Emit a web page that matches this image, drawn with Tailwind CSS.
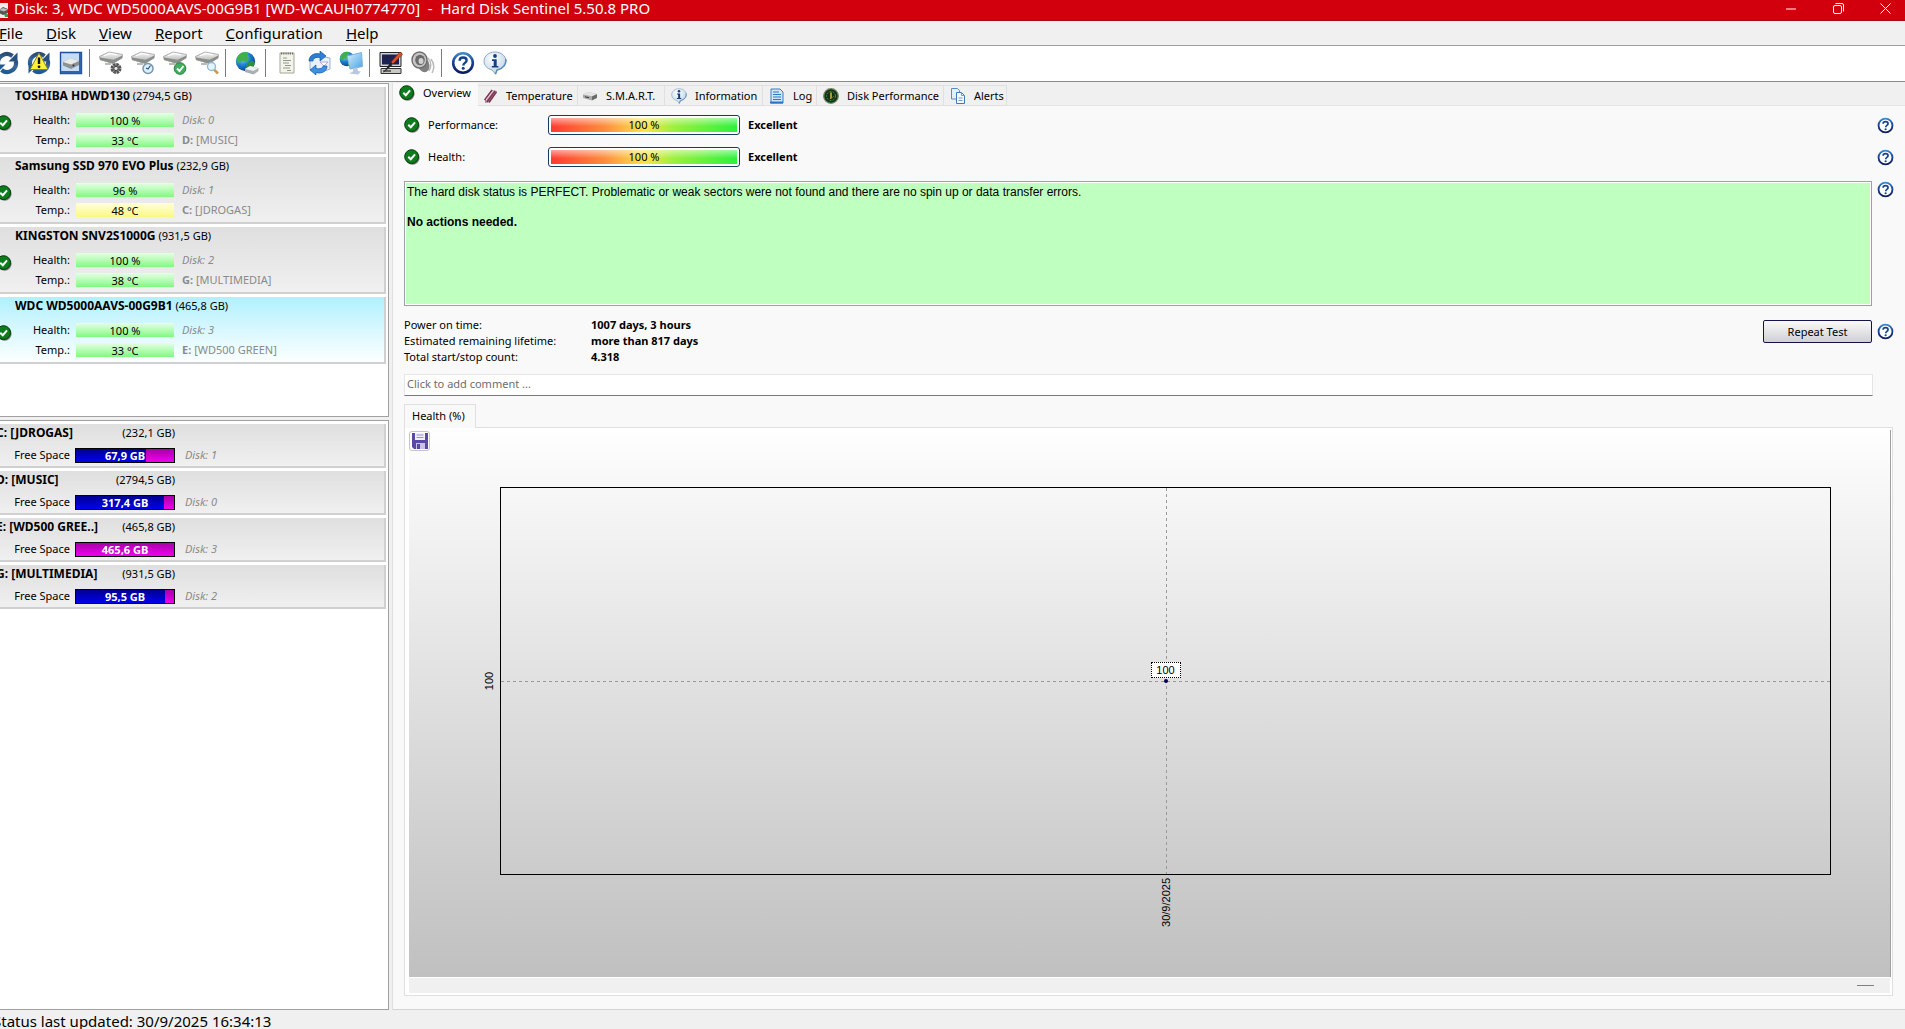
<!DOCTYPE html>
<html lang="en">
<head>
    <meta charset="UTF-8">
    <meta name="viewport" content="width=device-width, initial-scale=1.0">
    <title>Hard Disk Sentinel</title>
    <script src="https://cdn.jsdelivr.net/npm/@tailwindcss/browser@4"></script>
</head>
<body class="flex flex-col h-screen overflow-hidden bg-[#f0f0f0] text-black text-[11px] leading-4 font-['Noto_Sans','Open_Sans',sans-serif]">

    <!-- Shared icons -->
    <svg class="absolute w-0 h-0">
        <defs>
            <linearGradient id="g-drive" x1="0" y1="0" x2="0" y2="1"><stop offset="0" stop-color="#fafafa"/><stop offset="1" stop-color="#a4a8a4"/></linearGradient>
            <linearGradient id="g-arrow" x1="0" y1="0" x2="0" y2="1"><stop offset="0" stop-color="#2a4b78"/><stop offset="0.5" stop-color="#3c6a9c"/><stop offset="1" stop-color="#1f5a93"/></linearGradient>
            <linearGradient id="g-sky" x1="0" y1="0" x2="1" y2="1"><stop offset="0" stop-color="#d4f0fc"/><stop offset="1" stop-color="#4aa3e6"/></linearGradient>
            <linearGradient id="g-ring" x1="0" y1="0" x2="0" y2="1"><stop offset="0" stop-color="#3a8ac8"/><stop offset="0.4" stop-color="#1c479c"/><stop offset="1" stop-color="#0a1c5a"/></linearGradient>
            <radialGradient id="g-globe" cx="0.35" cy="0.3" r="0.8"><stop offset="0" stop-color="#8fdcff"/><stop offset="0.5" stop-color="#1b7fd0"/><stop offset="1" stop-color="#0a3478"/></radialGradient>
            <radialGradient id="g-bubble" cx="0.4" cy="0.3" r="0.8"><stop offset="0" stop-color="#ffffff"/><stop offset="1" stop-color="#b4cfe4"/></radialGradient>
        </defs>
        <symbol id="i-ok" viewBox="0 0 16 16">
            <circle cx="8.6" cy="8.8" r="7" fill="#777"/>
            <circle cx="7.6" cy="7.6" r="6.9" fill="#0c7c1c" stroke="#043a0a"/>
            <path d="M4.3 7.8 6.8 10.2 11 5.4" fill="none" stroke="#fff" stroke-width="2"/>
        </symbol>
        <symbol id="i-help" viewBox="0 0 24 24">
            <circle cx="12" cy="12" r="9.8" fill="#fdfeff" stroke="url(#g-ring)" stroke-width="2.6"/>
            <path d="M8.6 9.7c0-2 1.4-3.2 3.5-3.2s3.5 1.2 3.5 2.9c0 2.5-3.3 2.5-3.3 5" fill="none" stroke="#16408f" stroke-width="2.4"/>
            <circle cx="12.2" cy="17.3" r="1.5" fill="#16408f"/>
        </symbol>
        <symbol id="i-info" viewBox="0 0 24 24">
            <path d="M12 1C5.800 1 1 5 1 10.200c0 4.300 3.300 7.700 8 8.700L12.500 23.300 14 19c5.200-.7 9-4.300 9-8.800C23 5 18.200 1 12 1z" fill="url(#g-bubble)" stroke="#8eaac4"/>
            <path d="M22.700 8c.8 5-2.500 9.500-8.700 11l-1.500 4" fill="none" stroke="#5a88b4" stroke-width="1.400"/>
            <circle cx="12" cy="5" r="1.900" fill="#153f80"/>
            <path d="M9 8.300h4.700v6.700h1.700v1.600H8.800V15h1.900V9.900H9z" fill="#153f80"/>
        </symbol>
        <symbol id="i-cycle" viewBox="0 0 24 24">
            <path d="M3.200 14A9 9 0 0 1 17.500 5" fill="none" stroke="url(#g-arrow)" stroke-width="4.200"/>
            <path d="M20.800 10A9 9 0 0 1 6.500 19" fill="none" stroke="url(#g-arrow)" stroke-width="4.200"/>
            <path d="M22.500 1.500v9h-9z" fill="#27517f"/>
            <path d="M1.500 22.500v-9h9z" fill="#1f5a93"/>
        </symbol>
        <symbol id="i-drive" viewBox="0 0 24 24">
            <path d="M.5 5.500 10 1l13.500 2.500L23 7l-9 5.500L1 8.500z" fill="url(#g-drive)" stroke="#8f938f" stroke-width=".7"/>
            <path d="M1 6.500 14.500 8.800 23.300 4.400V7L14 12.500 1 9z" fill="#8b8f8b"/>
            <path d="M5 4.800 11 2.500l7 1.300" fill="none" stroke="#fff" stroke-width="1.200"/>
        </symbol>
        <symbol id="i-disk" viewBox="0 0 16 16">
            <path d="M1 6.500 6 4l9 2v4l-5 2.500L1 10z" fill="#a9aca9"/>
            <path d="M1 6.500 6 4l9 2-5 2.300z" fill="#e4e6e4"/>
            <path d="M10 8.500 15 6.200v3.600L10 12.300z" fill="#686a68"/>
            <path d="M3 8.800l4 .9" stroke="#333" />
        </symbol>
        <symbol id="i-globe" viewBox="0 0 24 24">
            <circle cx="12" cy="12" r="11" fill="url(#g-globe)"/>
            <path d="M4 5c3-4 8-4.500 11-3l-1.500 3.500L16 8l-3 4.500-4-1.500-4 2.500-3-1C1.500 9 2.500 7 4 5z" fill="#3fb04a"/>
            <path d="M15 13l5-2 2.500 1.500c-.5 5-4 8.500-8 9.500l-2-4z" fill="#2a9238"/>
        </symbol>
    </svg>

    <!-- Title bar -->
    <header class="flex items-center h-[21px] shrink-0 bg-[#d2000c] border-b border-[#a80a14] text-white text-[15px] leading-5 overflow-hidden">
        <svg class="w-3 h-4 -ml-1 mt-px shrink-0" viewBox="0 0 12 16"><path d="M0 0h12v15H0z" fill="#f4ecec"/><path d="M3 7 7 4l5 2v4l-5 2-4-2z" fill="#555"/><path d="M3 7 7 5l5 1.500-4 2z" fill="#bbb"/><path d="M8 11h4v3H9z" fill="#3b9b45"/></svg>
        <h1 class="ml-[6px] whitespace-pre -mt-1">Disk: 3, WDC WD5000AAVS-00G9B1 [WD-WCAUH0774770]  -  Hard Disk Sentinel 5.50.8 PRO</h1>
        <div class="flex ml-auto -mr-1 h-full -mt-1">
            <button class="w-[47px] flex justify-center items-center" aria-label="Minimize"><svg class="w-[11px] h-[11px]" viewBox="0 0 11 11"><path d="M0 6h10" stroke="#fff"/></svg></button>
            <button class="w-[47px] flex justify-center items-center" aria-label="Restore"><svg class="w-[11px] h-[11px]" viewBox="0 0 11 11" fill="none" stroke="#fff"><rect x=".5" y="2.500" width="8" height="8" rx="1.500"/><path d="M2.500.5H9q1.500 0 1.500 1.500v6.500"/></svg></button>
            <button class="w-[47px] flex justify-center items-center" aria-label="Close"><svg class="w-[11px] h-[11px]" viewBox="0 0 11 11"><path d="M.5.5l10 10M10.500.5l-10 10" stroke="#fff"/></svg></button>
        </div>
    </header>

    <!-- Menu -->
    <nav class="flex items-center gap-[23px] h-[25px] shrink-0 -ml-px pb-px text-[15px] leading-5 border-b border-[#a0a0a0]">
        <a href="#"><u>F</u>ile</a>
        <a href="#"><u>D</u>isk</a>
        <a href="#"><u>V</u>iew</a>
        <a href="#"><u>R</u>eport</a>
        <a href="#"><u>C</u>onfiguration</a>
        <a href="#"><u>H</u>elp</a>
    </nav>

    <!-- Toolbar -->
    <div class="h-9 shrink-0 bg-white border-b border-[#8c8c8c]">
        <div class="flex items-center h-full pb-[2px] -ml-[9px] [&_button]:w-8 [&_button]:flex [&_button]:justify-center [&_svg]:w-6 [&_svg]:h-6 [&_i]:w-px [&_i]:h-7 [&_i]:ml-[2px] [&_i]:mr-[5px] [&_i]:bg-[#7a7a7a]">
            <button aria-label="Refresh"><svg><use href="#i-cycle"/></svg></button>
            <button aria-label="Refresh with warning"><svg viewBox="0 0 24 24"><use href="#i-cycle"/><path d="M12 2 21 18.500H3z" fill="#fdf23a" stroke="#8a8420"/><path d="M12 6.500v6.500" stroke="#111" stroke-width="2.400"/><circle cx="12" cy="15.800" r="1.400" fill="#111"/></svg></button>
            <button aria-label="Disk panel"><svg viewBox="0 0 24 24"><path d="M1.500 1.500h21v21h-21z" fill="#c5dcf4" stroke="#1f4f96" stroke-width="1.400"/><path d="M2 20h20v2.500H2zM20 2h2.500v20H20z" fill="#2c65b0"/><path d="M4 11 11 7l9 3v4l-8 4-8-3.500z" fill="#8d918f"/><path d="M4 11 11 7l9 3-8 3.500z" fill="#e8eae8"/><circle cx="14.500" cy="14.500" r="1" fill="#333"/></svg></button>
            <i></i>
            <button aria-label="Disk settings"><svg viewBox="0 0 24 24"><use href="#i-drive"/><path d="M6 13h6" stroke="#b9bcb9" stroke-width="2"/><circle cx="17" cy="17.500" r="4" fill="#bbb" stroke="#555" stroke-width="3" stroke-dasharray="2.500 .6"/><circle cx="17" cy="17.500" r="2.200" fill="#ddd" stroke="#444"/></svg></button>
            <button aria-label="Disk schedule"><svg viewBox="0 0 24 24"><use href="#i-drive"/><path d="M6 13h6" stroke="#b9bcb9" stroke-width="2"/><circle cx="17" cy="17.500" r="5" fill="#dcf0fa" stroke="#7895ad" stroke-width="1.500"/><path d="M19.500 14.500 17 18l-2-1" fill="none" stroke="#235a88" stroke-width="1.200"/></svg></button>
            <button aria-label="Disk test"><svg viewBox="0 0 24 24"><use href="#i-drive"/><path d="M6 13h6" stroke="#b9bcb9" stroke-width="2"/><circle cx="17" cy="17.500" r="5.800" fill="#3fae5c" stroke="#257a3c"/><path d="M14 17.500l2.500 2.500 4-5" fill="none" stroke="#fff" stroke-width="2"/></svg></button>
            <button aria-label="Surface scan"><svg viewBox="0 0 24 24"><use href="#i-drive"/><path d="M6 13h6" stroke="#b9bcb9" stroke-width="2"/><path d="M19 18.500l4 4" stroke="#c89a50" stroke-width="2.500"/><circle cx="16.500" cy="15.500" r="4" fill="#e2f4fd" stroke="#8fb8d2" stroke-width="1.300"/></svg></button>
            <i></i>
            <button aria-label="Network disks"><svg viewBox="0 0 24 24"><use href="#i-globe" width="21" height="21"/><path d="M10 18 15 15l8.500 2v3l-5 3.500L10 21z" fill="#a9aeb2"/><path d="M10 18 15 15l8.500 2-5 3z" fill="#eef0f0"/></svg></button>
            <i></i>
            <button aria-label="Report"><svg viewBox="0 0 24 24"><path d="M5 2h14v20H5z" fill="#f2f4ec" stroke="#a3a895"/><path d="M6 2.500h12" stroke="#6c7064" stroke-width="2" stroke-dasharray="1.200 1"/><path d="M8 7h4M8 9.500h8M8 12h6M10 14.500h6M8 17h7M12 19.500h4" stroke="#8f9a8c"/></svg></button>
            <button aria-label="Send report"><svg viewBox="0 0 24 24"><path d="M3 9 12 5l11 2v11l-11 4-9-3z" fill="#e8f1fa" stroke="#9bb0d0"/><path d="M13 11h8l-4 4z" fill="#fff" stroke="#b5a8d0"/><path d="M2 10c0-6 6-8.500 11-7V0l6 5-6 5V6.500C9 6 6 7 6 10z" fill="#2e7fd4" stroke="#1858a8" stroke-width=".7"/><path d="M20 15c0 6-6 8-11 6.500V24l-6-5 6-5v3.500c4 .6 7 0 7-2.500z" fill="#3c92e0" stroke="#1858a8" stroke-width=".7"/></svg></button>
            <button aria-label="Remote monitoring"><svg viewBox="0 0 24 24"><use href="#i-globe" width="16" height="16"/><path d="M8 5 22.500 1.500l1 14L11 18z" fill="url(#g-sky)" stroke="#7fb0dc"/><path d="M14 17.500l4-1 1 3.500 3 .5-3 3-9-1 4-2z" fill="#b9c8e0"/></svg></button>
            <i></i>
            <button aria-label="Appearance"><svg viewBox="0 0 24 24"><path d="M1 1.500h21v14H1z" fill="#cfd0d8" stroke="#222"/><path d="M3 3.500h17v10H3z" fill="#1c2150"/><path d="M2 17.500h20v5H2z" fill="#c9c9c4" stroke="#333"/><path d="M4 20h8" stroke="#444" stroke-width="1.500"/><path d="M12 11 21 1l2.500 2L14 13z" fill="#e0522a" stroke="#7c2408" stroke-width=".7"/><path d="M4 22 11 12l2.500 2z" fill="#222"/></svg></button>
            <button aria-label="Sound"><svg viewBox="0 0 24 24"><path d="M17 7q5 6 1 13M20 8q5 7 1 14" fill="none" stroke="#bbb" stroke-width="1.500"/><ellipse cx="12" cy="13" rx="6" ry="8.500" fill="#808080" transform="rotate(-25 12 13)"/><ellipse cx="8.500" cy="9" rx="7.500" ry="8" fill="#c6c6c6" stroke="#6e6e6e" stroke-width="1.400"/><ellipse cx="9" cy="9" rx="4.800" ry="5.300" fill="#6a6a6a"/><ellipse cx="10" cy="10" rx="2.500" ry="3" fill="#d0d0d0"/></svg></button>
            <i></i>
            <button aria-label="Help"><svg><use href="#i-help"/></svg></button>
            <button aria-label="About"><svg><use href="#i-info"/></svg></button>
        </div>
    </div>

    <main class="flex flex-1 min-h-0 pt-px">
        <!-- Left column -->
        <aside class="flex flex-col w-[389px] shrink-0 gap-[3px]">
            <section id="disks" class="flex flex-col gap-[3px] h-[334px] pt-[3px] pr-[2px] bg-white border-t border-r border-b border-[#a0a0a0] overflow-hidden"></section>
            <section id="volumes" class="flex flex-col gap-[3px] flex-1 pt-[3px] pr-[2px] bg-white border-t border-r border-b border-[#a0a0a0] overflow-hidden"></section>
        </aside>

        <!-- Right column -->
        <div class="flex flex-col flex-1 min-w-0 ml-[3px] border-l border-[#e0e0e0]">
            <div class="flex items-end h-[23px] shrink-0 [&_button]:flex [&_button]:items-center [&_button]:gap-2 [&_button]:whitespace-nowrap [&_svg]:w-4 [&_svg]:h-4 [&_svg]:shrink-0">
                <button class="w-[85px] h-[23px] pb-1 pl-[6px] bg-[#f9f9f9]"><svg><use href="#i-ok"/></svg>Overview</button>
                <button class="w-[100px] h-[21px] pl-1 border-t border-r border-b border-[#e0e0e0]"><svg viewBox="0 0 16 16"><path d="M3 11 10 2l5 1-7 11-5 1z" fill="#b08a9c"/><path d="M2.500 12 10 2M5 14 13 3M7 14.500 14.500 4" stroke="#7d3150" stroke-width="1.300"/><path d="M4 12 11.500 2.500" stroke="#f3dbe4"/></svg>Temperature</button>
                <button class="w-[87px] h-[21px] pl-1 border-t border-r border-b border-[#e0e0e0]"><svg><use href="#i-disk"/></svg>S.M.A.R.T.</button>
                <button class="w-[98px] h-[21px] pl-[6px] border-t border-r border-b border-[#e0e0e0]"><svg><use href="#i-info"/></svg>Information</button>
                <button class="w-[54px] h-[21px] pl-[6px] border-t border-r border-b border-[#e0e0e0]"><svg viewBox="0 0 16 16"><path d="M2 1h9l3 3v11H2z" fill="#cfe6fa" stroke="#3a7cc0"/><path d="M4 4h6M4 6.500h8M4 9h8M4 11.500h8" stroke="#2f74c0"/><path d="M1 14.500h13" stroke="#2f74c0" stroke-width="2"/></svg>Log</button>
                <button class="w-[127px] h-[21px] pl-[6px] border-t border-r border-b border-[#e0e0e0]"><svg viewBox="0 0 16 16"><circle cx="8" cy="8" r="7.300" fill="#173018" stroke="#6d8a66" stroke-width="1.300"/><circle cx="8" cy="8" r="4.500" fill="none" stroke="#2da04a" stroke-dasharray="2 1.200"/><path d="M8 11V4.500" stroke="#e8c840" stroke-width="1.400"/><path d="M8 11l3-3" stroke="#d83020"/></svg>Disk Performance</button>
                <button class="w-[63px] h-[21px] pl-[6px] border-t border-r border-b border-[#e0e0e0]"><svg viewBox="0 0 16 16"><path d="M1.500.5h6l2 2V11h-8z" fill="#e4effa" stroke="#5a8ac0"/><path d="M6.500 4.500h5l3 3v8h-8z" fill="#f4f9fe" stroke="#4478b8"/><path d="M11.500 4.500v3h3M8.500 10h4M8.500 12.500h4" fill="none" stroke="#6f9ccc"/></svg>Alerts</button>
                <div class="flex-1 border-b border-[#e4e4e4]"></div>
            </div>

            <div class="flex flex-col flex-1 min-h-0 bg-[#f9f9f9] pl-[11px] pt-[9px] pr-3 pb-[13px] border-b border-[#d4d4d4]">
                <div class="flex items-center h-5">
                    <svg class="w-4 h-4"><use href="#i-ok"/></svg>
                    <span id="perf-label" class="ml-2 w-[120px]">Performance:</span>
                    <div role="progressbar" aria-labelledby="perf-label" aria-valuenow="100" class="w-[192px] h-5 p-[2px] rounded-[3px] border border-[#1c3a5e] bg-white">
                        <div class="h-full text-center leading-[14px] bg-[linear-gradient(#ffffff88,#ffffff00_60%),linear-gradient(90deg,#fe3a30,#fd8a3c_28%,#fbe44c_50%,#9cf03c_66%,#2cf23c)]">100 %</div>
                    </div>
                    <b class="ml-2">Excellent</b>
                    <button class="ml-auto -mr-px" aria-label="Help"><svg class="w-[17px] h-[17px]"><use href="#i-help"/></svg></button>
                </div>
                <div class="flex items-center h-5 mt-3">
                    <svg class="w-4 h-4"><use href="#i-ok"/></svg>
                    <span id="health-label" class="ml-2 w-[120px]">Health:</span>
                    <div role="progressbar" aria-labelledby="health-label" aria-valuenow="100" class="w-[192px] h-5 p-[2px] rounded-[3px] border border-[#1c3a5e] bg-white">
                        <div class="h-full text-center leading-[14px] bg-[linear-gradient(#ffffff88,#ffffff00_60%),linear-gradient(90deg,#fe3a30,#fd8a3c_28%,#fbe44c_50%,#9cf03c_66%,#2cf23c)]">100 %</div>
                    </div>
                    <b class="ml-2">Excellent</b>
                    <button class="ml-auto -mr-px" aria-label="Help"><svg class="w-[17px] h-[17px]"><use href="#i-help"/></svg></button>
                </div>

                <div class="flex items-start mt-[14px] gap-[5px] -mr-px">
                    <div class="flex-1 h-[125px] border border-[#a0a0a0] bg-white p-px">
                        <div class="h-full bg-[#bfffbf] px-px pt-[2px] text-[12px] leading-[15px] font-['Liberation_Sans',sans-serif]">
                            <p>The hard disk status is PERFECT. Problematic or weak sectors were not found and there are no spin up or data transfer errors.</p>
                            <p class="mt-[15px] font-bold">No actions needed.</p>
                        </div>
                    </div>
                    <button aria-label="Help"><svg class="w-[17px] h-[17px]"><use href="#i-help"/></svg></button>
                </div>

                <div class="flex items-start mt-[11px] -mr-px">
                    <dl class="grid grid-cols-[187px_auto]">
                        <dt>Power on time:</dt><dd class="font-bold">1007 days, 3 hours</dd>
                        <dt>Estimated remaining lifetime:</dt><dd class="font-bold">more than 817 days</dd>
                        <dt>Total start/stop count:</dt><dd class="font-bold">4.318</dd>
                    </dl>
                    <button class="ml-auto mt-[3px] w-[109px] h-[23px] rounded-[2px] border border-[#14144a] bg-linear-to-b from-[#fafafa] to-[#d0d0d4]">Repeat Test</button>
                    <button class="ml-[5px] mt-[6px]" aria-label="Help"><svg class="w-[17px] h-[17px]"><use href="#i-help"/></svg></button>
                </div>

                <input type="text" aria-label="Comment" placeholder="Click to add comment ..." class="mt-[9px] mr-[20px] h-[22px] shrink-0 px-[2px] pb-[3px] bg-white border border-[#e6e6e6] border-b-[#7a7a7a] placeholder:text-[#6d6d6d]">

                <div class="flex items-end h-6 mt-2">
                    <button class="w-[72px] h-6 pl-[7px] pb-[2px] text-left border-t border-l border-r border-[#e0e0e0]">Health (%)</button>
                    <div class="flex-1 border-b border-[#e0e0e0]"></div>
                </div>
                <div class="flex flex-col flex-1 min-h-0 pl-1 pt-[2px] pr-px pb-[2px] border-l border-r border-b border-[#e0e0e0] bg-white">
                    <div class="relative flex flex-col flex-1 border-r border-[#a0a0a0] bg-linear-to-b from-[#fefefe] to-[#c0c0c0] font-['Liberation_Sans',sans-serif]">
                        <button class="absolute left-0 top-px w-[21px] h-5 flex items-center justify-center rounded-[3px] border border-[#c4c4cc] bg-white" aria-label="Save">
                            <svg class="w-4 h-4" viewBox="0 0 16 16"><path d="M0 0h16v16H2L0 14z" fill="#5a48a8"/><path d="M3 0h10v7H3z" fill="#f2f0fa"/><path d="M4.500 2h7M4.500 4.500h7" stroke="#9a8fd0"/><path d="M4 10h9v6H4z" fill="#c9c2e8"/><path d="M5 11h3v5H5z" fill="#5a48a8"/></svg>
                        </button>
                        <!-- Plot area with crosshair -->
                        <div class="relative flex-1 mt-[57px] ml-[91px] mr-[59px] border border-black">
                            <div class="absolute inset-x-0 top-1/2 h-px bg-[repeating-linear-gradient(90deg,#999_0_3px,transparent_3px_6px)]"></div>
                            <div class="absolute inset-y-0 left-1/2 w-px bg-[repeating-linear-gradient(#999_0_3px,transparent_3px_6px)]"></div>
                            <span class="absolute left-1/2 top-1/2 -translate-x-1/2 -mt-[19px] w-[30px] h-4 leading-[14px] text-center bg-white border border-dotted border-black">100</span>
                            <span class="absolute left-1/2 top-1/2 w-1 h-1 -ml-[2px] -mt-[2px] rounded-full bg-[#00005a]"></span>
                            <span class="absolute right-full top-1/2 mr-1 -translate-y-1/2 [writing-mode:vertical-rl]"><span class="block rotate-180">100</span></span>
                            <span class="absolute left-1/2 top-full mt-1 -translate-x-1/2 [writing-mode:vertical-rl]"><span class="block rotate-180">30/9/2025</span></span>
                        </div>
                        <div class="h-[102px] shrink-0"></div>
                    </div>
                    <div class="flex justify-end items-center h-[15px] mt-px mr-px pr-4 bg-[#f0f0f0]">
                        <span class="w-[17px] h-px bg-[#808080]"></span>
                    </div>
                </div>
            </div>
        </div>
    </main>

    <footer class="h-[19px] shrink-0 -ml-[7px] text-[15px] leading-[23px] overflow-hidden">Status last updated: 30/9/2025 16:34:13</footer>

    <script>
        const disks = [
            { name: 'TOSHIBA HDWD130', size: '2794,5 GB', health: '100 %', temp: '33 °C', no: 0, drive: 'D:', label: '[MUSIC]' },
            { name: 'Samsung SSD 970 EVO Plus', size: '232,9 GB', health: '96 %', temp: '48 °C', no: 1, drive: 'C:', label: '[JDROGAS]', warm: true },
            { name: 'KINGSTON SNV2S1000G', size: '931,5 GB', health: '100 %', temp: '38 °C', no: 2, drive: 'G:', label: '[MULTIMEDIA]' },
            { name: 'WDC WD5000AAVS-00G9B1', size: '465,8 GB', health: '100 %', temp: '33 °C', no: 3, drive: 'E:', label: '[WD500 GREEN]', selected: true },
        ]

        const volumes = [
            { name: 'C: [JDROGAS]', size: '232,1 GB', free: '67,9 GB', used: 71, no: 1 },
            { name: 'D: [MUSIC]', size: '2794,5 GB', free: '317,4 GB', used: 90, no: 0 },
            { name: 'E: [WD500 GREE..]', size: '465,8 GB', free: '465,6 GB', used: 0, no: 3 },
            { name: 'G: [MULTIMEDIA]', size: '931,5 GB', free: '95,5 GB', used: 91, no: 2 },
        ]

        const green = 'bg-linear-to-b from-[#e4ffe4] to-[#80f880]'
        const yellow = 'bg-linear-to-b from-[#ffffd8] to-[#fcf880]'

        document.getElementById('disks').innerHTML = disks.map(d => `
            <article class="h-[67px] shrink-0 pt-px border-r-2 border-b-2 border-[#d0d0d0] ${d.selected ? 'bg-linear-to-b from-[#b0f0ff] to-[#fcffff]' : 'bg-linear-to-b from-[#dfdfdf] to-[#f0f0f0]'}">
                <h2 class="pl-[15px] h-[17px]"><b class="text-[12px]">${d.name}</b> (${d.size})</h2>
                <div class="flex items-start mt-[7px]">
                    <svg class="w-4 h-4 -ml-1 mt-[3px] shrink-0"><use href="#i-ok"/></svg>
                    <div class="grid grid-cols-[58px_98px_auto] items-center gap-x-[6px] gap-y-1">
                        <span class="text-right">Health:</span>
                        <span class="h-4 pt-px"><span class="block h-[14px] leading-[15px] text-center ${green}">${d.health}</span></span>
                        <i class="pl-[2px] text-[#8a8a8a]">Disk: ${d.no}</i>
                        <span class="text-right">Temp.:</span>
                        <span class="h-4 pt-px"><span class="block h-[14px] leading-[15px] text-center ${d.warm ? yellow : green}">${d.temp}</span></span>
                        <span class="pl-[2px] text-[#8a8a8a]"><b>${d.drive}</b> ${d.label}</span>
                    </div>
                </div>
            </article>`).join('')

        document.getElementById('volumes').innerHTML = volumes.map(v => `
            <article class="h-11 shrink-0 pt-px border-r-2 border-b-2 border-[#d0d0d0] bg-linear-to-b from-[#dfdfdf] to-[#f0f0f0]">
                <h2 class="flex justify-between w-[179px] -ml-1"><b class="text-[12px]">${v.name}</b> <span>(${v.size})</span></h2>
                <div class="flex items-center mt-[6px]">
                    <span class="w-[70px] text-right">Free Space</span>
                    <div class="relative ml-[5px] w-[100px] h-[15px] border border-black bg-linear-to-b from-[#a800a8] to-[#f000f0]">
                        <div class="h-full bg-linear-to-b from-[#000090] to-[#0000f0]" style="width:${v.used}%"></div>
                        <b class="absolute inset-0 text-center leading-[14px] text-white">${v.free}</b>
                    </div>
                    <i class="ml-[10px] text-[#8a8a8a]">Disk: ${v.no}</i>
                </div>
            </article>`).join('')
    </script>
</body>
</html>
